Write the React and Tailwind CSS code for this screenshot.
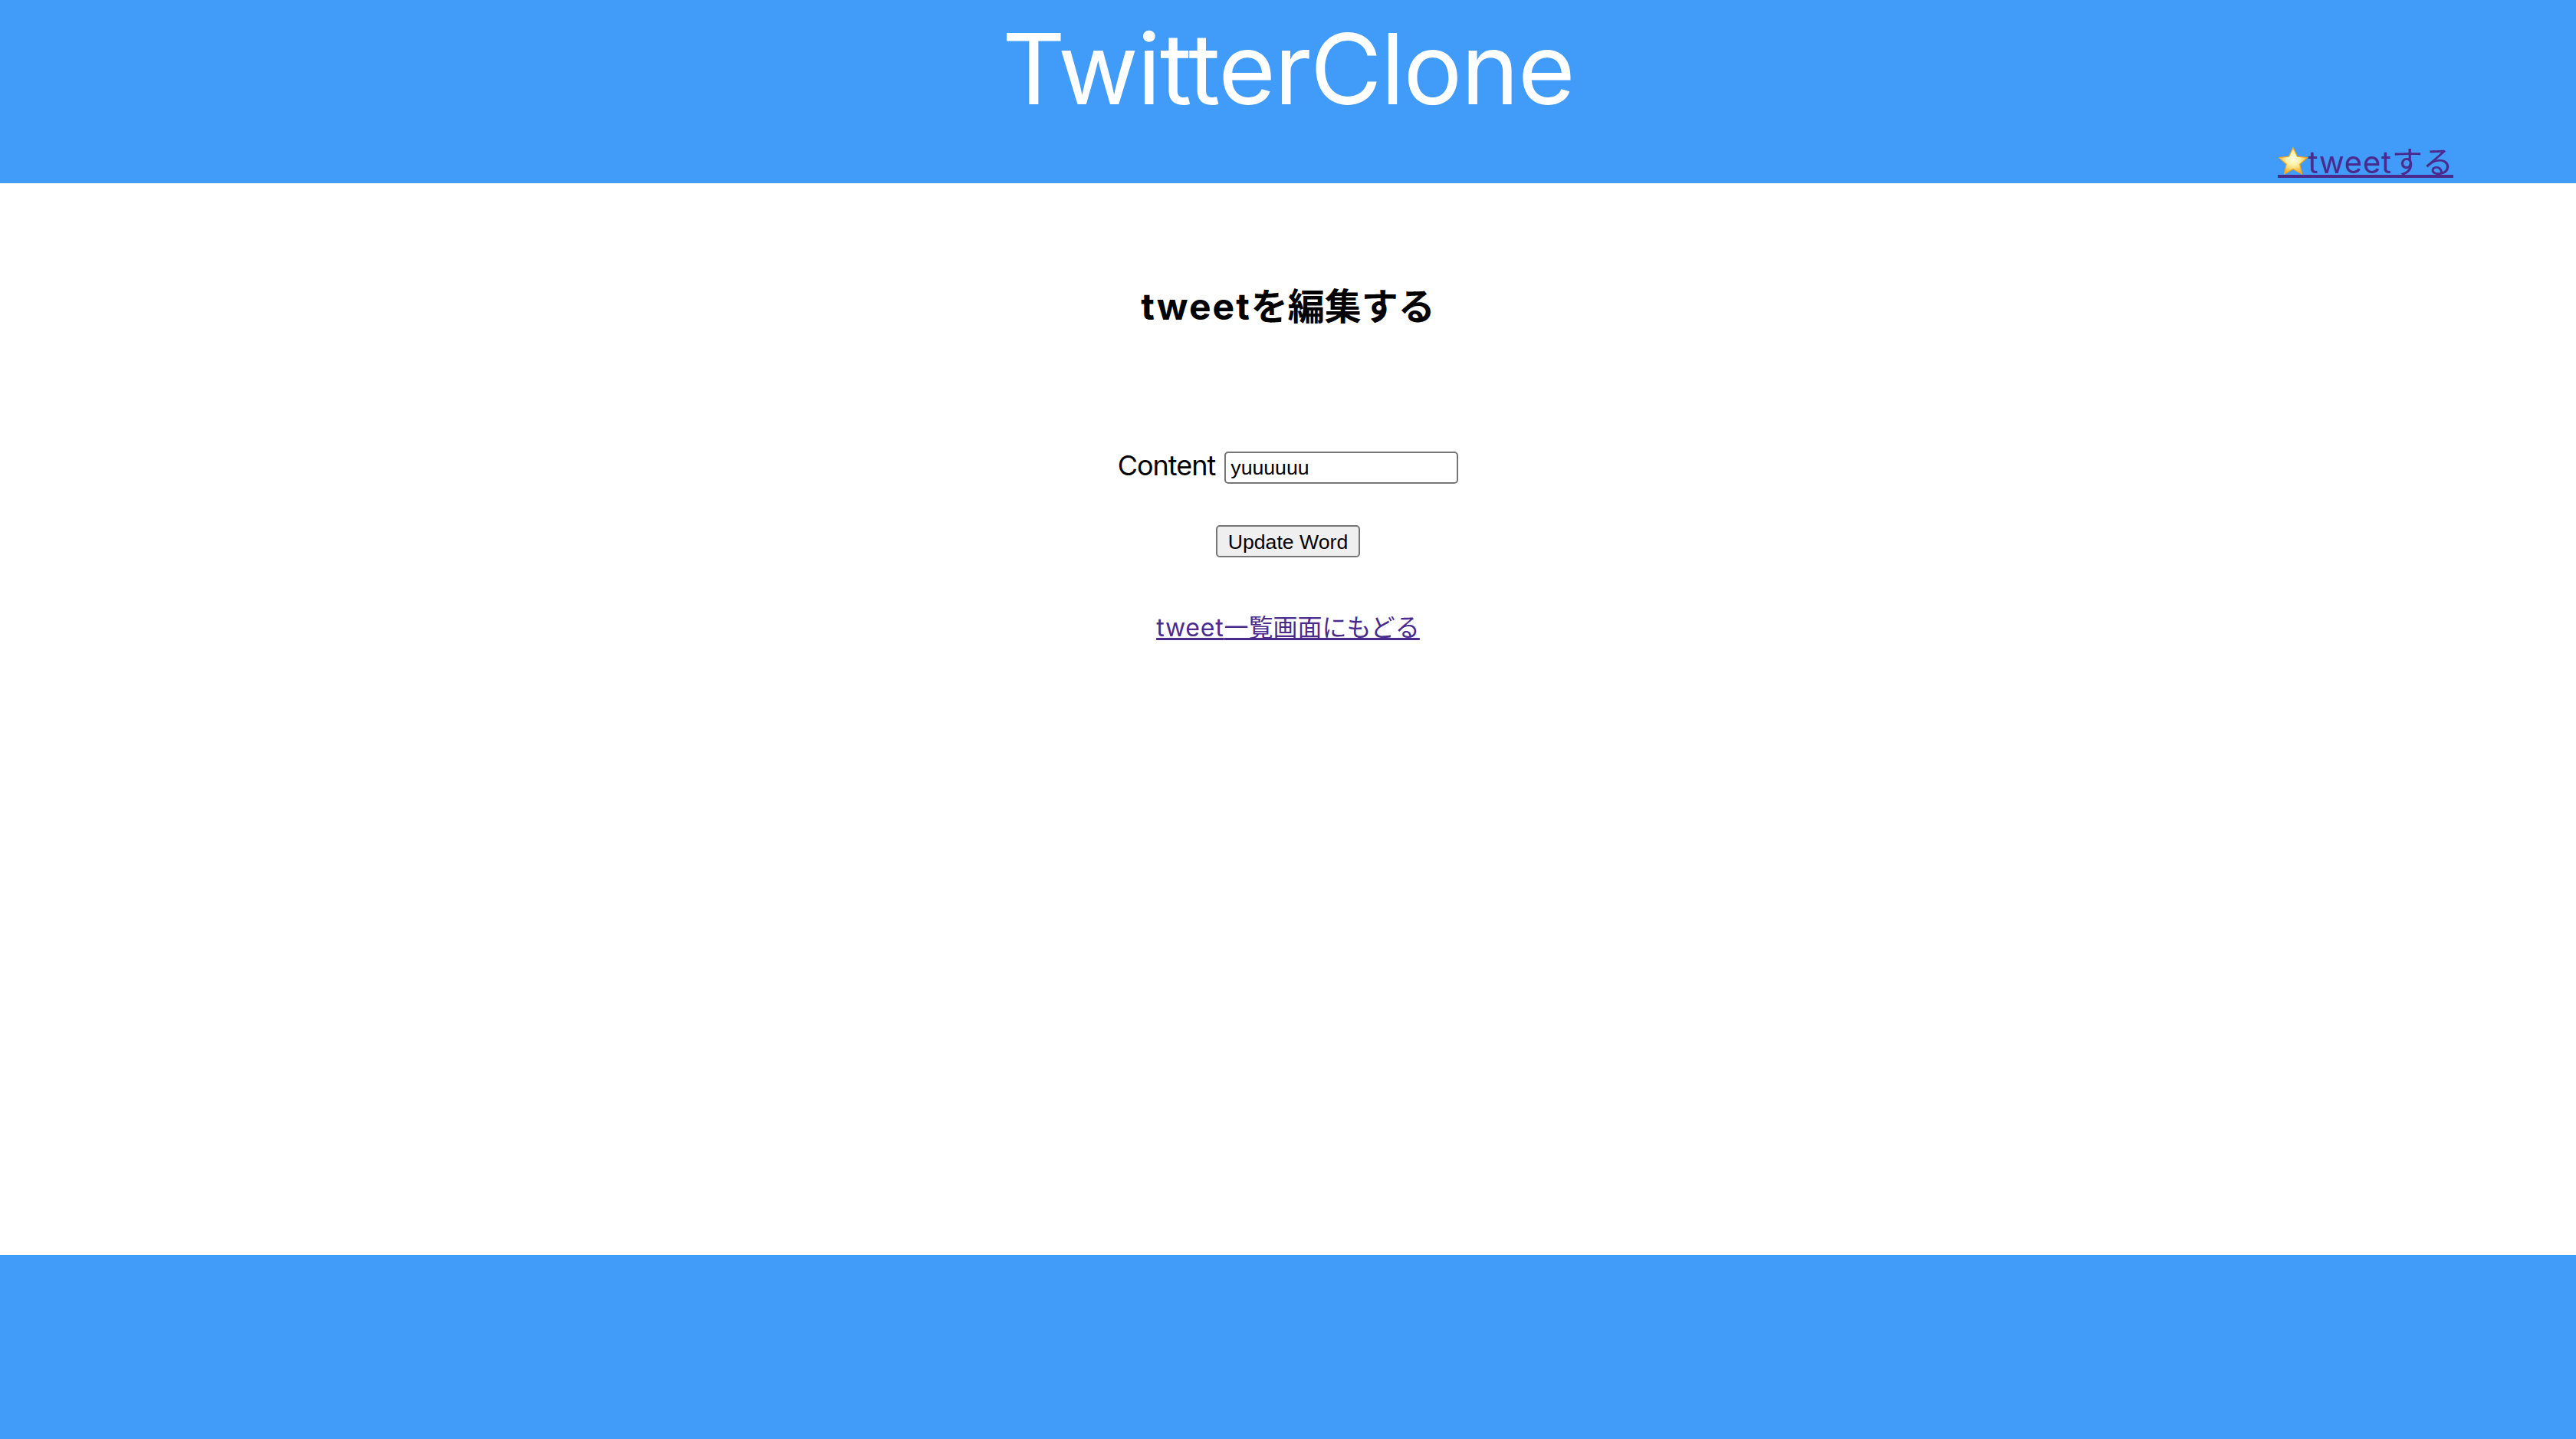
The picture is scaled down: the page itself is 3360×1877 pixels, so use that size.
const sans = 'font-["Liberation_Sans","Noto_Sans_CJK_JP",sans-serif]'
const latin = 'font-["Inter","Noto_Sans_CJK_JP",sans-serif]'

function Star() {
  return (
    <svg viewBox="0 0 40 40" className="w-10 h-10 -mb-[2px] flex-shrink-0">
      <defs>
        <radialGradient id="star-fill" cx="50%" cy="42%" r="58%">
          <stop offset="0%" stopColor="#fffde8" />
          <stop offset="45%" stopColor="#fff0a0" />
          <stop offset="100%" stopColor="#f9a91c" />
        </radialGradient>
      </defs>
      <path
        d="M20 2.5l5.4 11.6 13 1.5-9.7 8.6 2.8 12.8L20 30.4 8.5 37l2.8-12.8-9.7-8.6 13-1.5z"
        fill="url(#star-fill)"
        stroke="#f4a623"
        strokeWidth="1.2"
        strokeLinejoin="round"
      />
    </svg>
  )
}

export default function App() {
  return (
    <div className={`min-h-[1877px] flex flex-col bg-white text-black ${sans}`}>
      {/* Header */}
      <header className="h-[239px] flex-shrink-0 flex flex-col bg-[#419bf9]">
        <h1 className={`h-[179px] text-center text-[128px] leading-[179px] font-normal tracking-[-1.5px] text-white ${latin}`}>TwitterClone</h1>
        <div className="flex justify-end pr-[160px]">
          <a href="#" className={`flex items-end h-[53px] border-b-4 border-[#4b2a8e] text-[40px] leading-[33px] text-[#4b2a8e] ${latin}`}>
            <Star />
            <span><span className="tracking-[0.8px]">tweet</span>する</span>
          </a>
        </div>
      </header>

      {/* Edit form */}
      <main className="flex-1 flex flex-col items-center">
        <h2 className={`mt-[133px] text-[48px] leading-[56px] font-bold ${latin}`}><span className="tracking-[2px]">tweet</span>を編集する</h2>
        <form className="mt-[161px] flex flex-col items-center">
          <div className="flex items-center gap-3">
            <label className={`text-[36px] leading-[42px] -mt-[6px] tracking-[-1px] ${latin}`}>Content</label>
            <input
              defaultValue="yuuuuuu"
              className="w-[305px] h-[42px] px-[6px] text-[26.67px] border-[2px] border-[#767676] rounded-[5px] outline-none"
            />
          </div>
          <button type="button" className="mt-[54px] w-[188px] h-[42px] text-[26.67px] bg-[#efefef] border-[2px] border-[#767676] rounded-[5px]">
            Update Word
          </button>
        </form>
        <a href="#" className={`mt-[71px] text-[32px] leading-[42px] underline text-[#4b2a8e] ${latin}`}><span className="tracking-[0.8px]">tweet</span>一覧画面にもどる</a>
      </main>

      {/* Footer */}
      <footer className="h-[240px] flex-shrink-0 bg-[#419bf9]" />
    </div>
  )
}
